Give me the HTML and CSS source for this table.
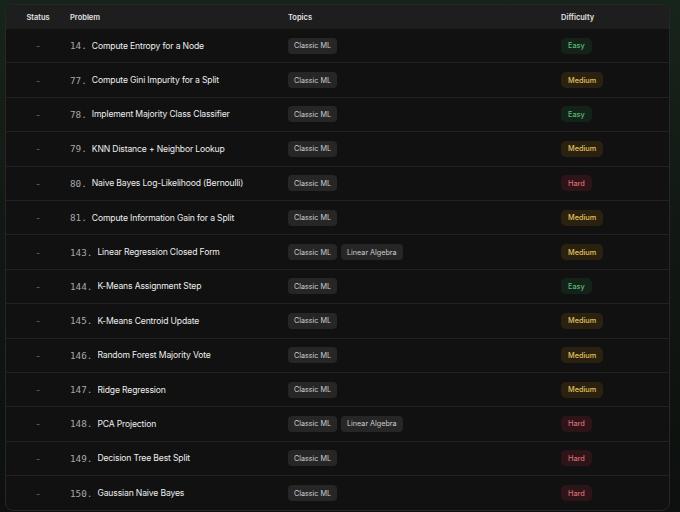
FILE: index.html
```html
<!DOCTYPE html>
<html>
<head>
<meta charset="utf-8">
<link rel="stylesheet" href="styles.css">
</head>
<body>
<div class="page">
  <div class="table">
    <div class="row head">
      <div class="c status">Status</div>
      <div class="c">Problem</div>
      <div class="c">Topics</div>
      <div class="c">Difficulty</div>
    </div>
    <div class="row"><div class="c status">-</div><div class="c prob"><span class="num">14.</span><span class="title">Compute Entropy for a Node</span></div><div class="c topics"><span class="tag">Classic ML</span></div><div class="c"><span class="diff easy">Easy</span></div></div>
    <div class="row"><div class="c status">-</div><div class="c prob"><span class="num">77.</span><span class="title">Compute Gini Impurity for a Split</span></div><div class="c topics"><span class="tag">Classic ML</span></div><div class="c"><span class="diff medium">Medium</span></div></div>
    <div class="row"><div class="c status">-</div><div class="c prob"><span class="num">78.</span><span class="title">Implement Majority Class Classifier</span></div><div class="c topics"><span class="tag">Classic ML</span></div><div class="c"><span class="diff easy">Easy</span></div></div>
    <div class="row"><div class="c status">-</div><div class="c prob"><span class="num">79.</span><span class="title">KNN Distance + Neighbor Lookup</span></div><div class="c topics"><span class="tag">Classic ML</span></div><div class="c"><span class="diff medium">Medium</span></div></div>
    <div class="row"><div class="c status">-</div><div class="c prob"><span class="num">80.</span><span class="title">Naive Bayes Log-Likelihood (Bernoulli)</span></div><div class="c topics"><span class="tag">Classic ML</span></div><div class="c"><span class="diff hard">Hard</span></div></div>
    <div class="row"><div class="c status">-</div><div class="c prob"><span class="num">81.</span><span class="title">Compute Information Gain for a Split</span></div><div class="c topics"><span class="tag">Classic ML</span></div><div class="c"><span class="diff medium">Medium</span></div></div>
    <div class="row"><div class="c status">-</div><div class="c prob"><span class="num">143.</span><span class="title">Linear Regression Closed Form</span></div><div class="c topics"><span class="tag">Classic ML</span><span class="tag">Linear Algebra</span></div><div class="c"><span class="diff medium">Medium</span></div></div>
    <div class="row"><div class="c status">-</div><div class="c prob"><span class="num">144.</span><span class="title">K-Means Assignment Step</span></div><div class="c topics"><span class="tag">Classic ML</span></div><div class="c"><span class="diff easy">Easy</span></div></div>
    <div class="row"><div class="c status">-</div><div class="c prob"><span class="num">145.</span><span class="title">K-Means Centroid Update</span></div><div class="c topics"><span class="tag">Classic ML</span></div><div class="c"><span class="diff medium">Medium</span></div></div>
    <div class="row"><div class="c status">-</div><div class="c prob"><span class="num">146.</span><span class="title">Random Forest Majority Vote</span></div><div class="c topics"><span class="tag">Classic ML</span></div><div class="c"><span class="diff medium">Medium</span></div></div>
    <div class="row"><div class="c status">-</div><div class="c prob"><span class="num">147.</span><span class="title">Ridge Regression</span></div><div class="c topics"><span class="tag">Classic ML</span></div><div class="c"><span class="diff medium">Medium</span></div></div>
    <div class="row"><div class="c status">-</div><div class="c prob"><span class="num">148.</span><span class="title">PCA Projection</span></div><div class="c topics"><span class="tag">Classic ML</span><span class="tag">Linear Algebra</span></div><div class="c"><span class="diff hard">Hard</span></div></div>
    <div class="row"><div class="c status">-</div><div class="c prob"><span class="num">149.</span><span class="title">Decision Tree Best Split</span></div><div class="c topics"><span class="tag">Classic ML</span></div><div class="c"><span class="diff hard">Hard</span></div></div>
    <div class="row last"><div class="c status">-</div><div class="c prob"><span class="num">150.</span><span class="title">Gaussian Naive Bayes</span></div><div class="c topics"><span class="tag">Classic ML</span></div><div class="c"><span class="diff hard">Hard</span></div></div>
  </div>
</div>
</body>
</html>
```

FILE: styles.css
```css
* { box-sizing: border-box; }
html, body { margin: 0; height: 100%; }
body {
  background: linear-gradient(180deg, #17241b 0%, #111813 45%, #0d100e 100%);
  font-family: Inter, "Noto Sans", sans-serif;
  overflow: hidden;
}
.page {
  padding: 4px 10px 0 5px;
}
.table {
  width: 665px;
  border: 1px solid #262626;
  border-radius: 8px;
  background: #111111;
  overflow: hidden;
}
.row {
  display: grid;
  grid-template-columns: 64px 218px 273px 1fr;
  align-items: center;
  height: 34.4px;
  border-bottom: 1px solid #222222;
}
.row.last { border-bottom: none; }
.row.head {
  height: 24px;
  background: #1e1e1e;
  border-bottom: none;
  font-size: 7.5px;
  font-weight: 600;
  color: #e2e2e2;
}
.c {
  white-space: nowrap;
  display: flex;
  align-items: center;
}
.status { justify-content: center; color: #6b6b6b; font-size: 9px; }
.head .status { color: #e2e2e2; font-size: 7.5px; }
.num {
  font-family: "DejaVu Sans Mono", monospace;
  font-size: 9.3px;
  color: #a8a8a8;
  margin-right: 5px;
}
.title {
  font-size: 8.6px;
  letter-spacing: -0.15px;
  color: #eeeeee;
}
.topics { gap: 4px; }
.tag {
  display: inline-flex;
  align-items: center;
  height: 16px;
  padding: 0 6px;
  border-radius: 4px;
  background: #262626;
  color: #cfcfcf;
  font-size: 7.2px;
}
.diff {
  display: inline-flex;
  align-items: center;
  height: 16px;
  padding: 0 7px;
  border-radius: 5px;
  font-size: 7.3px;
  font-weight: 500;
}
.easy { background: #14231a; color: #5cb877; }
.medium { background: #2a2110; color: #e2c45c; }
.hard { background: #2c1418; color: #d96a74; }
```
